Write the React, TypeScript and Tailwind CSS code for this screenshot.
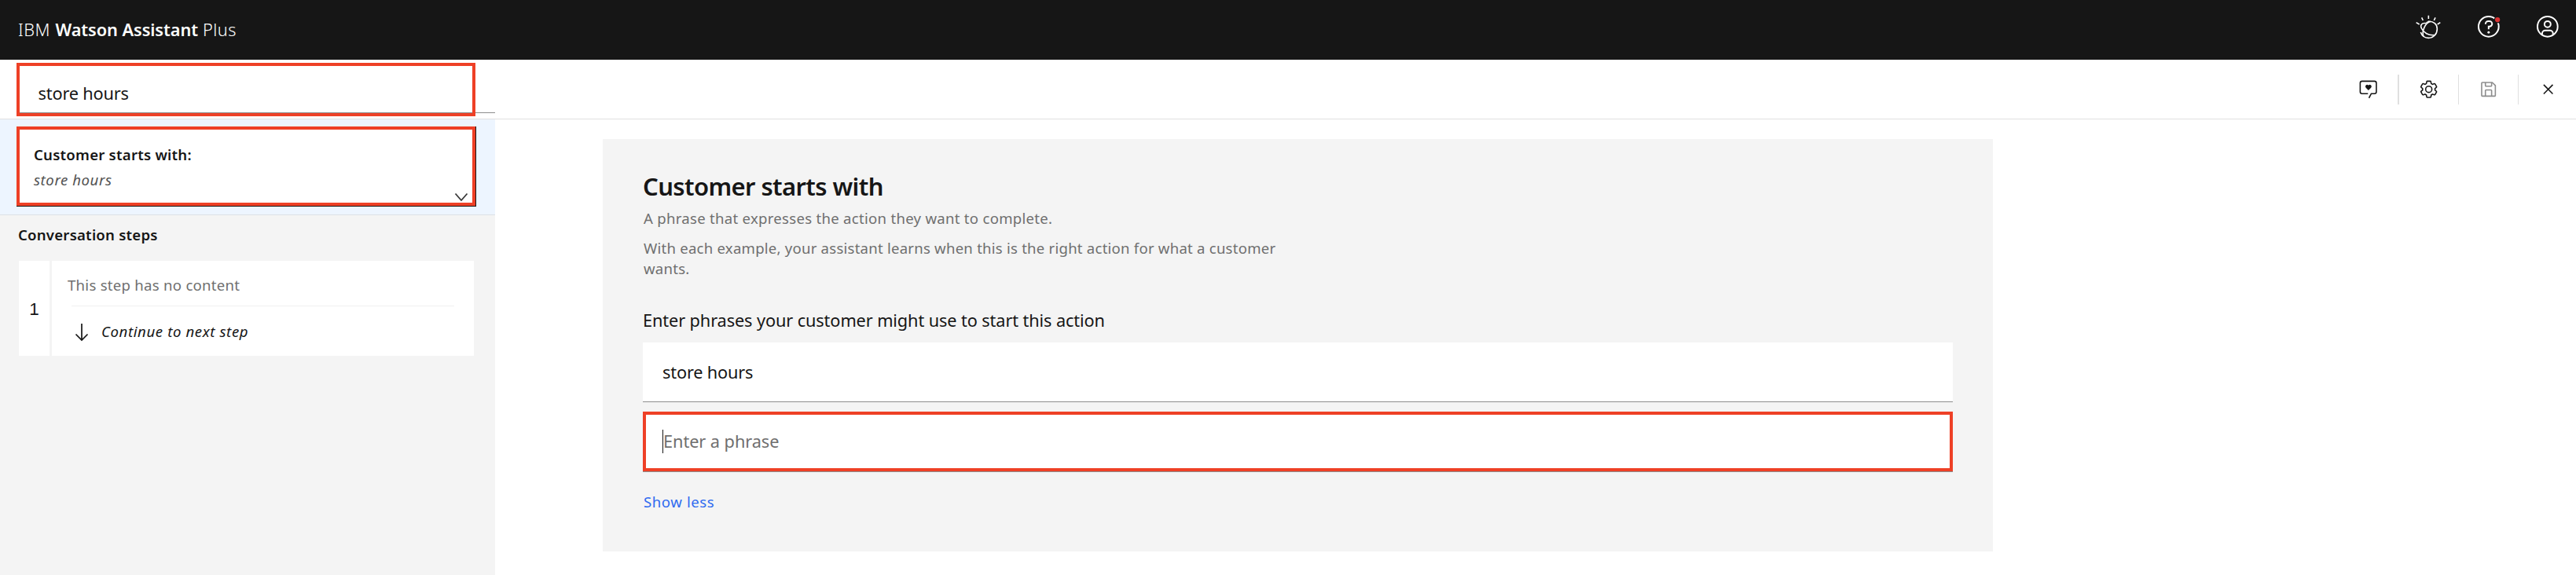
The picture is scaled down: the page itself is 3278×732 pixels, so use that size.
import type { ReactNode } from 'react';

function WatsonIcon() {
  return (
    <svg className="h-[33.33px] w-[35px]" viewBox="400 50 105 100" fill="none" stroke="#fff" strokeWidth="4.8">
      <path d="M452 58v13M426 66l5 11M478 66l-5 11M405 85l12 7M497 85l-11 7" />
      <path d="M450 81c22-2 35 11 35 28 0 20-14 35-33 35-14 0-25-8-30-22" />
      <path d="M433 139c-8-19 5-52 27-58" />
      <path d="M442 88c-15-3-23 7-17 19 8 17 27 28 49 26" />
      <path d="M440 89c4-5 8-7 14-8" strokeWidth="3.5" />
    </svg>
  );
}

function HelpIcon() {
  return (
    <svg className="h-[31.67px] w-[31.67px]" viewBox="0 0 32 32" fill="#fff">
      <path d="M16,2A14,14,0,1,0,30,16,14,14,0,0,0,16,2Zm0,26A12,12,0,1,1,28,16,12,12,0,0,1,16,28Z" />
      <circle cx="16" cy="23.5" r="1.5" />
      <path d="M17,8H15.5A4.49,4.49,0,0,0,11,12.5V13h2v-.5A2.5,2.5,0,0,1,15.5,10H17a2.5,2.5,0,0,1,0,5H15v4.5h2V17a4.5,4.5,0,0,0,0-9Z" />
      <circle cx="27.4" cy="7.2" r="4.4" fill="#161616" />
      <circle cx="27.4" cy="7.2" r="3.2" fill="#da3233" />
    </svg>
  );
}

function UserIcon() {
  return (
    <svg className="h-[31.67px] w-[31.67px]" viewBox="0 0 32 32" fill="#fff">
      <path d="M16,8a5,5,0,1,0,5,5A5,5,0,0,0,16,8Zm0,8a3,3,0,1,1,3-3A3.0034,3.0034,0,0,1,16,16Z" />
      <path d="M16,2A14,14,0,1,0,30,16,14.0158,14.0158,0,0,0,16,2ZM10,26.3765V25a3.0033,3.0033,0,0,1,3-3h6a3.0033,3.0033,0,0,1,3,3v1.3765a11.8989,11.8989,0,0,1-12,0Zm13.9925-1.4507A5.0016,5.0016,0,0,0,19,20H13a5.0016,5.0016,0,0,0-4.9925,4.9258,12,12,0,1,1,15.985,0Z" />
    </svg>
  );
}

function ToolIcon({ children, color }: { children: ReactNode; color: string }) {
  return (
    <svg className="h-[25.33px] w-[25.33px]" viewBox="0 0 32 32" fill={color}>
      {children}
    </svg>
  );
}

function Toolbar() {
  return (
    <div className="flex items-center">
      <div className="flex h-[38px] w-[77px] items-center justify-center border-r-2 border-[#e0e0e0]">
        <ToolIcon color="#161616">
          <path d="M18 30.5l-1.8-1 4-7.5H26a2 2 0 0 0 2-2V6a2 2 0 0 0-2-2H6a2 2 0 0 0-2 2v14a2 2 0 0 0 2 2h9.500v2H6a4 4 0 0 1-4-4V6a4 4 0 0 1 4-4h20a4 4 0 0 1 4 4v14a4 4 0 0 1-4 4h-4.600Z" />
          <path d="M16.300 17.800l-4.100-4.200a2.850 2.850 0 0 1 0-4 2.700 2.700 0 0 1 3.900 0l.2.2.2-.2a2.700 2.700 0 0 1 3.900 0 2.850 2.850 0 0 1 0 4Z" />
        </ToolIcon>
      </div>
      <div className="flex h-[38px] w-[76px] items-center justify-center border-r border-[#e0e0e0]">
        <ToolIcon color="#161616">
          <path d="M27,16.76c0-.25,0-.5,0-.76s0-.51,0-.77l1.92-1.68A2,2,0,0,0,29.3,11L26.94,7a2,2,0,0,0-1.73-1,2,2,0,0,0-.64.1l-2.43.82a11.35,11.35,0,0,0-1.31-.75l-.51-2.52a2,2,0,0,0-2-1.61H13.64a2,2,0,0,0-2,1.61l-.51,2.52a11.48,11.48,0,0,0-1.32.75L7.43,6.06A2,2,0,0,0,6.79,6,2,2,0,0,0,5.06,7L2.7,11a2,2,0,0,0,.41,2.51L5,15.24c0,.25,0,.5,0,.76s0,.51,0,.77L3.11,18.45A2,2,0,0,0,2.7,21L5.06,25a2,2,0,0,0,1.73,1,2,2,0,0,0,.64-.1l2.43-.82a11.35,11.35,0,0,0,1.31.75l.51,2.52a2,2,0,0,0,2,1.61h4.72a2,2,0,0,0,2-1.61l.51-2.52a11.48,11.48,0,0,0,1.32-.75l2.42.82a2,2,0,0,0,.64.1,2,2,0,0,0,1.73-1L29.3,21a2,2,0,0,0-.41-2.51ZM25.21,24l-3.43-1.16a8.86,8.86,0,0,1-2.71,1.57L18.36,28H13.64l-.71-3.55a9.36,9.36,0,0,1-2.7-1.57L6.79,24,4.43,20l2.72-2.4a8.9,8.9,0,0,1,0-3.13L4.43,12,6.79,8l3.43,1.16a8.86,8.86,0,0,1,2.71-1.57L13.64,4h4.72l.71,3.55a9.36,9.36,0,0,1,2.7,1.57L25.21,8,27.57,12l-2.72,2.4a8.9,8.9,0,0,1,0,3.13L27.57,20Z" />
          <path d="M16,22a6,6,0,1,1,6-6A5.94,5.94,0,0,1,16,22Zm0-10a3.91,3.91,0,0,0-4,4,3.91,3.91,0,0,0,4,4,3.91,3.91,0,0,0,4-4A3.91,3.91,0,0,0,16,12Z" />
        </ToolIcon>
      </div>
      <div className="flex h-[38px] w-[76px] items-center justify-center border-r border-[#e0e0e0]">
        <ToolIcon color="#8d8d8d">
          <path d="M27.71,9.29l-5-5A1,1,0,0,0,22,4H6A2,2,0,0,0,4,6V26a2,2,0,0,0,2,2H26a2,2,0,0,0,2-2V10A1,1,0,0,0,27.71,9.29ZM12,6h8v4H12Zm8,20H12V18h8Zm2,0V18a2,2,0,0,0-2-2H12a2,2,0,0,0-2,2v8H6V6h4v4a2,2,0,0,0,2,2h8a2,2,0,0,0,2-2V6.41l4,4V26Z" />
        </ToolIcon>
      </div>
      <div className="flex h-[38px] w-[73px] items-center justify-center pl-[2px]">
        <ToolIcon color="#161616">
          <path d="M24 9.4L22.600 8 16 14.600 9.400 8 8 9.400 14.600 16 8 22.600 9.400 24 16 17.400 22.600 24 24 22.600 17.400 16z" />
        </ToolIcon>
      </div>
    </div>
  );
}

function Sidebar() {
  return (
    <aside className="flex w-[630px] flex-col bg-[#f4f4f4]">
      <div className="h-[122px] border-b border-[#dde1e6] bg-[#edf5ff] pt-[9px] pl-[21px]">
        <div className="relative h-[102px] w-[585px] border-r border-b border-[#161616] bg-white pt-[22px] pl-[22px]">
          <div className="text-[18.6px] leading-[28px] font-semibold tracking-[0.23px]">Customer starts with:</div>
          <div className="mt-[4px] text-[18.6px] leading-[28px] tracking-[0.57px] text-[#525252] italic">store hours</div>
          <svg className="absolute right-[9px] bottom-[5px] h-[12px] w-[18px]" viewBox="0 0 18 12" fill="none" stroke="#393939" strokeWidth="1.8">
            <path d="M1.500 1.500 9 10l7.500-8.500" />
          </svg>
          <div className="absolute top-0 left-0 h-[101px] w-[584px] border-4 border-[#ee4026]" />
        </div>
      </div>
      <div className="px-[24px] pt-[11px]">
        <h2 className="-ml-px text-[18.6px] leading-[28px] font-semibold tracking-[0.22px]">Conversation steps</h2>
        <div className="mt-[19px] flex h-[121px] w-[579px] gap-[3px]">
          <div className="flex w-[39px] items-center justify-center bg-white pt-[2px] font-['Liberation_Sans',sans-serif] text-[22.5px]">1</div>
          <div className="flex-1 bg-white pr-[25px] pl-[19px]">
            <div className="pt-[17px] pl-px text-[18.6px] leading-[28px] tracking-[0.26px] text-[#6f6f6f]">This step has no content</div>
            <div className="mt-[12px] ml-[6px] border-t border-[#f0f0f0]" />
            <div className="flex pt-[18px] pl-[10px]">
              <svg className="mt-[3px] h-[24px] w-[18px]" viewBox="0 0 18 24" fill="none" stroke="#161616" strokeWidth="1.700">
                <path d="M9 1v20.500M1.500 14.500 9 22l7.500-7.500" />
              </svg>
              <span className="ml-[16px] text-[18.6px] leading-[28px] tracking-[0.6px] italic">Continue to next step</span>
            </div>
          </div>
        </div>
      </div>
    </aside>
  );
}

function Editor() {
  return (
    <main className="mt-[25px] ml-[137px] h-[525px] w-[1769px] bg-[#f4f4f4] pt-[39px] pr-[51px] pl-[51px]">
      <h1 className="text-[31px] leading-[42px] font-semibold tracking-[-0.62px]">Customer starts with</h1>
      <p className="mt-[7px] pl-px text-[18.6px] leading-[26px] tracking-[0.27px] text-[#6f6f6f]">
        A phrase that expresses the action they want to complete.
      </p>
      <p className="mt-[12px] w-[830px] pl-px text-[18.6px] leading-[26px] tracking-[0.22px] text-[#6f6f6f]">
        With each example, your assistant learns when this is the right action for what a customer wants.
      </p>
      <h2 className="mt-[39px] text-[21.75px] leading-[28px] tracking-[-0.12px]">
        Enter phrases your customer might use to start this action
      </h2>
      <div className="mt-[14px] flex h-[76px] items-center border-b border-[#8d8d8d] bg-white pl-[25px] text-[21.75px] leading-[28px] tracking-[-0.18px]">
        store hours
      </div>
      <div className="mt-[12px] border-b border-[#8d8d8d]">
        <div className="flex h-[76px] items-center border-4 border-[#ee4026] bg-white pl-[21px]">
          <span className="h-[30px] w-px bg-[#161616]" />
          <span className="text-[21.75px] leading-[28px] tracking-[-0.07px] text-[#6f6f6f]">Enter a phrase</span>
        </div>
      </div>
      <a className="mt-[24px] block pl-px text-[18.6px] leading-[28px] tracking-[0.58px] text-[#2f6bf0]">Show less</a>
    </main>
  );
}

export default function App() {
  return (
    <div className="flex h-[732px] w-full flex-col overflow-hidden bg-white font-['Noto_Sans',sans-serif] text-[#161616]">
      <header className="flex h-[76px] shrink-0 items-center justify-between bg-[#161616] text-white">
        <div className="flex pl-[23px] text-[21.75px] leading-[28px]">
          <span className="w-[47.500px] font-light tracking-[0.51px]">IBM</span>
          <span className="w-[187.500px] font-semibold tracking-[-0.08px]">Watson Assistant</span>
          <span className="font-light tracking-[0.48px]">Plus</span>
        </div>
        <div className="flex items-center pr-[20.500px] pb-[9px]">
          <WatsonIcon />
          <div className="ml-[42.500px] flex">
            <HelpIcon />
          </div>
          <div className="ml-[43.300px] flex">
            <UserIcon />
          </div>
        </div>
      </header>
      <div className="flex h-[76px] shrink-0 items-start justify-between border-b border-[#e0e0e0]">
        <div className="relative ml-[24px] h-[68px] w-[606px] border-b border-[#8d8d8d] pt-[29px] pl-[24.500px]">
          <span className="block text-[21.75px] leading-[28px] tracking-[-0.18px]">store hours</span>
          <div className="absolute top-[4px] -left-[3px] h-[68px] w-[584px] border-4 border-[#ee4026]" />
        </div>
        <div className="pt-[19px]">
          <Toolbar />
        </div>
      </div>
      <div className="flex flex-1">
        <Sidebar />
        <Editor />
      </div>
    </div>
  );
}
